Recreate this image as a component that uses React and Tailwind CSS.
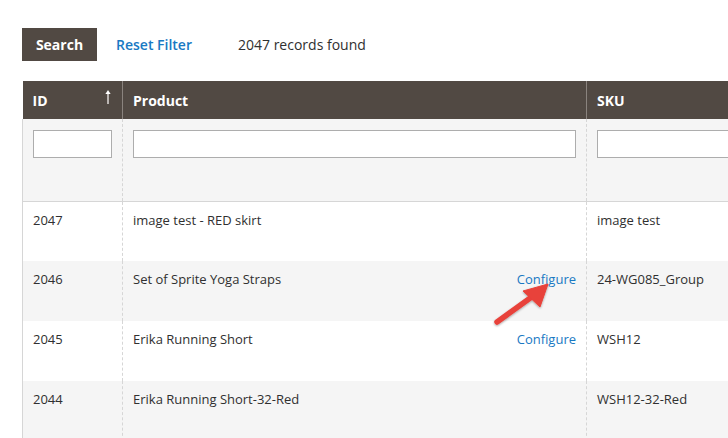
import React from "react";

const rows = [
  { id: "2047", name: "image test - RED skirt", sku: "image test", configure: false },
  { id: "2046", name: "Set of Sprite Yoga Straps", sku: "24-WG085_Group", configure: true },
  { id: "2045", name: "Erika Running Short", sku: "WSH12", configure: true },
  { id: "2044", name: "Erika Running Short-32-Red", sku: "WSH12-32-Red", configure: false },
];

export default function App() {
  return (
    <div
      className="relative w-[728px] h-[438px] overflow-hidden bg-white text-[#303030]"
      style={{ fontFamily: "'Open Sans', 'Liberation Sans', sans-serif" }}
    >
      {/* Toolbar */}
      <div className="flex items-center pl-[22px] pt-[28px] h-[61px]">
        <button className="h-[33px] w-[75px] bg-[#514943] text-white font-bold text-[14px]">
          Search
        </button>
        <span className="ml-[19px] text-[14px] font-semibold text-[#1979c3]">Reset Filter</span>
        <span className="ml-[46px] text-[14px] text-[#303030]">2047 records found</span>
      </div>

      {/* Grid */}
      <div className="ml-[22px] mt-[20px] w-[800px]">
        <table className="w-[800px] border-collapse table-fixed text-[13px]">
          <colgroup>
            <col className="w-[100px]" />
            <col className="w-[464px]" />
            <col />
          </colgroup>
          <thead>
            <tr className="bg-[#514943] text-white h-[38px]">
              <th className="relative text-left font-bold text-[14px] pl-[10px] border-r border-[#8a837e]">
                ID
                <svg className="absolute right-[11px] top-[9px]" width="6" height="14" viewBox="0 0 6 14">
                  <line x1="3" y1="3" x2="3" y2="14" stroke="#e8e4e2" strokeWidth="1.4" />
                  <polygon points="3,0 5.6,4 0.4,4" fill="#ffffff" />
                </svg>
              </th>
              <th className="text-left font-bold text-[14px] pl-[10px] border-r border-[#8a837e]">Product</th>
              <th className="text-left font-bold text-[14px] pl-[10px]">SKU</th>
            </tr>
          </thead>
          <tbody>
            <tr className="bg-[#f5f5f5] h-[82px] border-b border-l border-[#d6d6d6]">
              <td className="align-top pt-[11px] pl-[10px] pr-[10px] border-r border-dashed border-r-[#d6d6d6]">
                <div className="h-[28px] w-[79px] bg-white border border-[#adadad]" />
              </td>
              <td className="align-top pt-[11px] pl-[10px] pr-[10px] border-r border-dashed border-r-[#d6d6d6]">
                <div className="h-[28px] w-full bg-white border border-[#adadad]" />
              </td>
              <td className="align-top pt-[11px] pl-[10px] pr-[10px]">
                <div className="h-[28px] w-full bg-white border border-[#adadad]" />
              </td>
            </tr>
            {rows.map((r, i) => (
              <tr
                key={r.id}
                className={`h-[60px] border-l border-[#d6d6d6] ${i % 2 ? "bg-[#f5f5f5]" : "bg-white"}`}
              >
                <td className="align-top pt-[9px] pl-[10px] border-r border-dashed border-r-[#d6d6d6]">{r.id}</td>
                <td className="align-top pt-[9px] pl-[10px] pr-[10px] border-r border-dashed border-r-[#d6d6d6]">
                  <div className="flex justify-between">
                    <span>{r.name}</span>
                    {r.configure && <span className="text-[#1979c3]">Configure</span>}
                  </div>
                </td>
                <td className="align-top pt-[9px] pl-[10px]">{r.sku}</td>
              </tr>
            ))}
          </tbody>
        </table>
      </div>

      {/* Annotation arrow */}
      <svg className="absolute left-0 top-0 pointer-events-none" width="728" height="438">
        <defs>
          <filter id="sh" x="-20%" y="-20%" width="140%" height="140%">
            <feDropShadow dx="0" dy="1" stdDeviation="1.2" floodColor="#000" floodOpacity="0.35" />
          </filter>
        </defs>
        <g filter="url(#sh)" fill="#e8423b" stroke="#e8423b">
          <line x1="497" y1="322" x2="533" y2="296" strokeWidth="5.5" strokeLinecap="round" />
          <polygon points="548,284 540,307 523,291" strokeWidth="1" strokeLinejoin="round" />
        </g>
      </svg>
    </div>
  );
}
